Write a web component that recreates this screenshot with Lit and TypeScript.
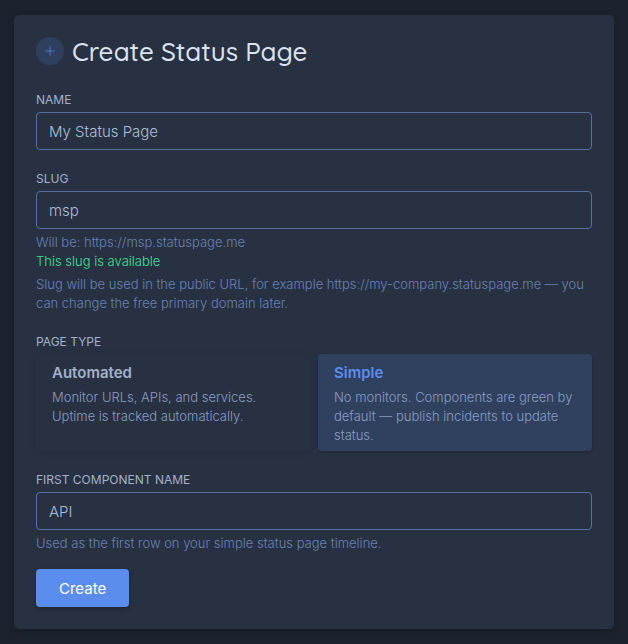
import { LitElement, html, css } from "lit";
import { customElement, state } from "lit/decorators.js";

interface PageType {
  id: string;
  title: string;
  description: string;
}

const PAGE_TYPES: PageType[] = [
  {
    id: "automated",
    title: "Automated",
    description: "Monitor URLs, APIs, and services. Uptime is tracked automatically.",
  },
  {
    id: "simple",
    title: "Simple",
    description: "No monitors. Components are green by default — publish incidents to update status.",
  },
];

@customElement("app-root")
export class AppRoot extends LitElement {
  @state() private slug = "msp";
  @state() private pageType = "simple";

  static styles = css`
    :host {
      display: block;
      box-sizing: border-box;
      min-height: 100vh;
      padding: 15px 14px;
      background: #1d232e;
      color: #a3b1cc;
      font-family: Inter, "Liberation Sans", sans-serif;
      font-size: 15px;
    }
    * {
      box-sizing: border-box;
    }
    .panel {
      padding: 22px;
      border-radius: 5px;
      background: #283142;
      box-shadow: 0 2px 6px rgba(0, 0, 0, 0.25);
    }
    .header {
      display: flex;
      align-items: flex-start;
      gap: 8px;
      margin-bottom: 23px;
    }
    .badge {
      display: grid;
      place-items: center;
      width: 28px;
      height: 28px;
      border-radius: 50%;
      background: #2f405f;
    }
    h1 {
      margin: 0;
      color: #dbe3f2;
      font-family: Quicksand, Lato, sans-serif;
      font-size: 26px;
      font-weight: 500;
      line-height: 30px;
    }
    form {
      display: flex;
      flex-direction: column;
      gap: 19px;
    }
    .field {
      display: flex;
      flex-direction: column;
      min-width: 0;
      margin: 0;
      padding: 0;
      border: 0;
    }
    .label {
      margin-bottom: 2px;
      padding: 0;
      font-size: 12px;
      line-height: 20px;
      text-transform: uppercase;
    }
    .input {
      width: 100%;
      height: 38px;
      padding: 0 12px;
      border: 1px solid #56709f;
      border-radius: 4px;
      outline: none;
      background: transparent;
      color: #afbdd8;
      font: inherit;
      font-weight: 300;
    }
    .hint {
      margin: 4px 0 0;
      color: #6882b6;
      font-size: 13px;
      font-weight: 300;
      line-height: 19px;
    }
    .status {
      margin: 0;
      color: #36e692;
    }
    .options {
      display: grid;
      grid-template-columns: 1fr 1fr;
      gap: 8px;
    }
    .option {
      position: relative;
      padding: 6px 16px;
      border-radius: 4px;
      box-shadow: 0 1px 6px rgba(0, 0, 0, 0.1);
      cursor: pointer;
    }
    .option:has(input:checked) {
      background: #30415f;
      box-shadow: 0 1px 3px rgba(0, 0, 0, 0.25);
    }
    .option input {
      position: absolute;
      inset: 0;
      margin: 0;
      opacity: 0;
    }
    .title {
      display: block;
      margin-bottom: 2px;
      font-weight: 600;
      line-height: 26px;
    }
    .option:has(input:checked) .title {
      color: #5b8def;
    }
    .description {
      display: block;
      color: #8a9dc4;
      font-size: 13px;
      font-weight: 300;
      line-height: 19px;
    }
    .submit {
      align-self: flex-start;
      height: 38px;
      margin-top: -3px;
      padding: 0 23px;
      border: 0;
      border-radius: 4px;
      background: #5b8def;
      box-shadow: 0 2px 4px rgba(0, 0, 0, 0.25);
      color: #fff;
      font: inherit;
      cursor: pointer;
    }
  `;

  private onSlug(event: Event) {
    this.slug = (event.target as HTMLInputElement).value;
  }

  render() {
    return html`
      <main class="panel">
        <header class="header">
          <span class="badge">
            <svg width="10" height="10" viewBox="0 0 10 10" aria-hidden="true">
              <path d="M5 0.5V9.5M0.5 5H9.5" fill="none" stroke="#4a78d0" stroke-width="1" />
            </svg>
          </span>
          <h1>Create Status Page</h1>
        </header>
        <form @submit=${(event: Event) => event.preventDefault()}>
          <div class="field">
            <label class="label" for="name">Name</label>
            <input class="input" id="name" type="text" value="My Status Page" />
          </div>
          <div class="field">
            <label class="label" for="slug">Slug</label>
            <input class="input" id="slug" type="text" .value=${this.slug} @input=${this.onSlug} />
            <p class="hint">Will be: https://${this.slug}.statuspage.me</p>
            <p class="hint status">This slug is available</p>
            <p class="hint">
              Slug will be used in the public URL, for example https://my-company.statuspage.me — you
              can change the free primary domain later.
            </p>
          </div>
          <fieldset class="field">
            <legend class="label">Page type</legend>
            <div class="options">
              ${PAGE_TYPES.map(
                (type) => html`
                  <label class="option">
                    <input
                      type="radio"
                      name="page-type"
                      value=${type.id}
                      .checked=${this.pageType === type.id}
                      @change=${() => (this.pageType = type.id)}
                    />
                    <span class="title">${type.title}</span>
                    <span class="description">${type.description}</span>
                  </label>
                `
              )}
            </div>
          </fieldset>
          <div class="field">
            <label class="label" for="component">First component name</label>
            <input class="input" id="component" type="text" value="API" />
            <p class="hint">Used as the first row on your simple status page timeline.</p>
          </div>
          <button class="submit" type="submit">Create</button>
        </form>
      </main>
    `;
  }
}
